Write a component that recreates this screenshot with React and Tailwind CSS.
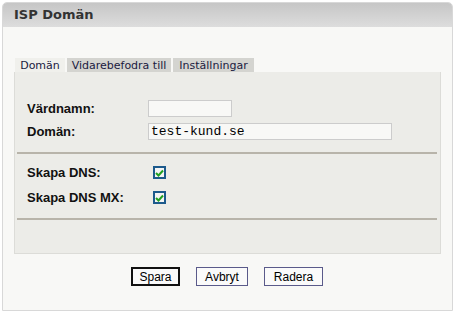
import React from "react";

function Check() {
  return (
    <span className="flex h-[13px] w-[13px] items-center justify-center border-2 border-[#1c5a8c] bg-[#f4f4f4]">
      <svg width="9" height="8" viewBox="0 0 9 8">
        <path d="M1 4 L3.5 6.5 L8 1.5" fill="none" stroke="#21a121" strokeWidth="2" />
      </svg>
    </span>
  );
}

export default function App() {
  const sans = { fontFamily: '"DejaVu Sans", Verdana, sans-serif' };
  const arial = { fontFamily: '"Liberation Sans", Arial, sans-serif' };
  return (
    <div className="h-[314px] w-[455px] bg-white pl-[2px] pt-[2px]">
      <div className="flex h-[309px] w-[451px] flex-col rounded-t-[5px] border border-[#d8d8d8] bg-[#f8f8f6]">
        <div
          className="flex h-[24px] items-center rounded-t-[4px] bg-gradient-to-b from-[#c6c6c6] to-[#dddddd] pl-[11px] text-[13px] font-bold text-[#333333]"
          style={sans}
        >
          ISP Domän
        </div>
        <div className="flex flex-1 flex-col pl-[11px] pt-[31px]">
          <div className="flex gap-[2px] pl-[1px] text-[11px] text-[#1a1a40]" style={sans}>
            <div className="flex h-[14px] w-[50px] items-center justify-center bg-[#f0f0ec] leading-none">Domän</div>
            <div className="flex h-[14px] w-[104px] items-center justify-center bg-[#d4d4d0] leading-none">Vidarebefodra till</div>
            <div className="flex h-[14px] w-[81px] items-center justify-center bg-[#d4d4d0] leading-none">Inställningar</div>
          </div>
          <div className="flex h-[182px] w-[427px] flex-col border border-t-0 border-[#dcdcd8] bg-[#ecece8]" style={arial}>
            <div className="flex flex-col gap-[6px] pl-[12px] pt-[28px]">
              <div className="flex h-[17px] items-center">
                <span className="w-[121px] text-[13px] font-bold leading-none text-[#111]">Värdnamn:</span>
                <div className="h-[17px] w-[84px] border border-[#cccccc] bg-[#f8f8f6]"></div>
              </div>
              <div className="flex h-[17px] items-center">
                <span className="w-[121px] text-[13px] font-bold leading-none text-[#111]">Domän:</span>
                <div
                  className="flex h-[17px] w-[244px] items-center border border-[#cccccc] bg-[#f8f8f6] pl-[2px] text-[13px] leading-none text-black"
                  style={{ fontFamily: '"Liberation Mono", "Courier New", monospace' }}
                >
                  test-kund.se
                </div>
              </div>
            </div>
            <div className="ml-[2px] mt-[12px] h-[2px] w-[420px] bg-[#b8b4aa]"></div>
            <div className="flex flex-col gap-[12px] pl-[12px] pt-[12px]">
              <div className="flex h-[13px] items-center">
                <span className="w-[126px] text-[13px] font-bold leading-none text-[#111]">Skapa DNS:</span>
                <Check />
              </div>
              <div className="flex h-[13px] items-center">
                <span className="w-[126px] text-[13px] font-bold leading-none text-[#111]">Skapa DNS MX:</span>
                <Check />
              </div>
            </div>
            <div className="ml-[2px] mt-[14px] h-[2px] w-[420px] bg-[#b8b4aa]"></div>
          </div>
          <div className="flex justify-center gap-[16px] pr-[12px] pt-[13px] text-[12px] text-black" style={arial}>
            <button className="h-[19px] w-[49px] border-2 border-[#111] bg-[#fafafa] leading-none">Spara</button>
            <button className="h-[19px] w-[52px] border border-[#5a5a8a] bg-[#fafafa] leading-none">Avbryt</button>
            <button className="h-[19px] w-[59px] border border-[#5a5a8a] bg-[#fafafa] leading-none">Radera</button>
          </div>
        </div>
      </div>
    </div>
  );
}
